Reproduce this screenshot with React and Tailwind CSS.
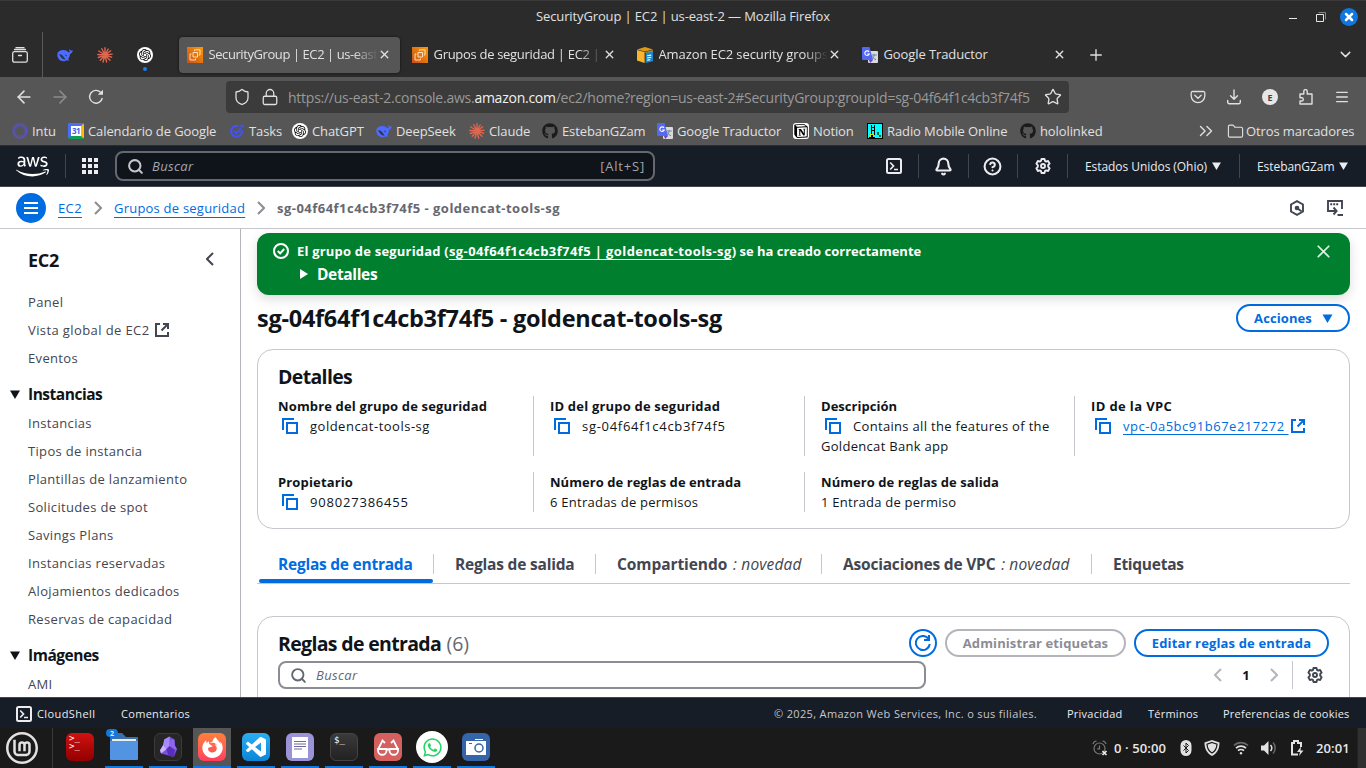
import {
  Bell, CircleHelp, ChevronDown, ChevronsRight, Plus, X, Star, Shield, Lock,
  ArrowLeft, ArrowRight, Search, Menu, Folder,
} from "lucide-react";
import { FaAws, FaGithub, FaWhatsapp } from "react-icons/fa";
import { SiOpenai, SiLinuxmint, SiFirefoxbrowser, SiNotion } from "react-icons/si";
import { BiLogoVisualStudio } from "react-icons/bi";

/* ---------- brand icons ---------- */
const Whale = () => (
  <svg viewBox="0 0 16 16" className="size-4 shrink-0">
    <path fill="#4d6bfe" d="M15.8 3.2c-.2-.1-.9.4-1.7.3-1-.1-1.300-1-1.800-1.500-.4 1.200 0 2.300.7 3-.7.5-1.600.3-2.500-.5C9.600 3.700 8.600 3.200 7.700 3.300c-1-.8-5-.6-6.700 2-1.600 2.700-.5 6.600 2.500 8.200 2.300 1.200 4.800.7 6.200-.3.800.4 1.800.5 2.700 0-.5-.4-1-.8-1.300-1.300 1.500-1.600 1.600-3.200 2-4.900 1.300-.4 2.500-1.800 2.700-3.800z" />
    <path fill="#2b2b2b" fillOpacity=".85" d="M2 7.500c1.700-.8 3.800.8 5 2.800.5.900 1 1.600 1.800 1.900-2.300.700-3.700-.4-4.900-1.900C3.200 9.300 2.700 8.100 2 7.500zM8 7.400c1 0 1.900.8 1.900 1.900-.9 0-1.900-.8-1.900-1.900z" />
  </svg>
);
const Burst = () => (
  <svg viewBox="0 0 16 16" className="size-4 shrink-0" stroke="#e0664f" strokeWidth="1.400" strokeLinecap="round">
    <path d="M8 8V.7M8 8l3.200-6M8 8l5.700-4.200M8 8l7.200-.9M8 8l6.600 2.200M8 8l5 5.300M8 8l1.600 7M8 8l-2 7M8 8l-4.800 5.200M8 8l-6.700 2.500M8 8L.8 7.500M8 8L1.800 4M8 8L4.800 1.700" />
  </svg>
);
const Gpt = () => (
  <span className="flex size-4 shrink-0 items-center justify-center rounded-full bg-white">
    <SiOpenai className="size-3 text-black" />
  </span>
);
const Ec2 = () => (
  <svg viewBox="0 0 16 16" className="size-4 shrink-0">
    <defs><linearGradient id="ec2" x1="0" y1="1" x2="1" y2="0"><stop stopColor="#c8511b" /><stop offset="1" stopColor="#ff9900" /></linearGradient></defs>
    <rect width="16" height="16" fill="url(#ec2)" />
    <path fill="none" stroke="#ffe9cf" strokeWidth=".9" d="M6 5.500h4.500V10H6zM4.500 7H3v6h5.500v-1.500M7.500 4V2.800H13V8h-1.200" />
  </svg>
);
const AwsDocs = () => (
  <svg viewBox="0 0 16 16" className="size-4 shrink-0">
    <path fill="#e09a12" d="M0 2.500L8 0l8 2.500-8 2z" /><path fill="#fbb52c" d="M0 3l7.600 2V16L0 13.500z" />
    <path fill="#c98708" d="M8.300 5L16 3v3H8.300z" /><path fill="#1c87c9" d="M8.600 5.800L16 4.500v9.700L8.600 16z" />
    <path stroke="#fff" strokeWidth="1.100" fill="none" d="M10.200 8.800l4-.7M10.200 11l4-.7M10.200 13.200l3-.6" />
  </svg>
);
const Translate = () => (
  <svg viewBox="0 0 16 16" className="size-4 shrink-0">
    <rect x="6" y="4" width="10" height="12" rx="1" fill="#d8dade" />
    <path stroke="#6b8a96" strokeWidth="1" fill="none" d="M9.500 8h5.300M12 7v1c0 2-1 3.500-2 4.300M10.500 9.500c.8 1.700 2 2.700 3.500 3.200" />
    <path fill="#6a3fd0" d="M7 13h4l-2.800 3z" /><path fill="#5468f2" d="M1 0h6.500L11 13H1a1 1 0 01-1-1V1a1 1 0 011-1z" />
    <path stroke="#fff" strokeWidth="1.100" fill="none" d="M7 4.800A2.300 2.300 0 107.300 7H5.200" />
  </svg>
);
const Calendar = () => (
  <span className="flex size-4 shrink-0 items-center justify-center overflow-hidden rounded-[2px] border-[3px] border-t-[#4a6ff0] border-r-[#fbbc04] border-b-[#0f9d58] border-l-[#4a6ff0] bg-white text-[8px] leading-none font-bold tracking-[-0.5px] text-[#3c5fe8]">
    31
  </span>
);
const Tasks = () => (
  <svg viewBox="0 0 16 16" className="size-4 shrink-0" fill="none" stroke="#4452f0">
    <path strokeWidth="2.300" d="M12.800 7.200A5.400 5.400 0 1 1 9.500 3.200" /><path strokeWidth="2.200" d="M5 8l2.300 2.300L12 5.500" /><path strokeWidth="1.200" d="M13 .8v4M11 2.800h4" />
  </svg>
);
const Intu = () => (
  <svg viewBox="0 0 16 16" className="size-4 shrink-0" fill="none" stroke="#5a50d8">
    <circle cx="8" cy="8" r="6.600" strokeWidth="2.400" strokeDasharray="1.500 .6" /><circle cx="8" cy="8" r="4.700" strokeWidth=".8" strokeDasharray="1 .5" />
  </svg>
);
const Notion = () => (
  <span className="flex size-4 shrink-0 items-center justify-center rounded-[3px] bg-white"><SiNotion className="size-[14px] text-black" /></span>
);
const Radio = () => (
  <svg viewBox="0 0 16 16" className="size-4 shrink-0" shapeRendering="crispEdges">
    <rect width="16" height="16" fill="#000" /><rect x="1" y="1" width="14" height="14" fill="#0ff" />
    <path stroke="#000" fill="none" d="M4.500 2v10M7.500 2v10M4 4.500h4M4 7.500h4" /><path fill="#dd0" d="M3 11h4v4H3z" />
    <path fill="#000" d="M2 14h6v1H2zM4 12h2v2H4z" /><path fill="#063" d="M10 9h2v3h-2zM12 12h2v2h-2z" />
  </svg>
);
const Github = () => <FaGithub className="size-4 shrink-0 text-[#1b1b1b]" />;

/* ---------- AWS icons ---------- */
const Copy = () => (
  <svg viewBox="0 0 16 16" className="size-4 shrink-0" fill="none" stroke="#006ce0" strokeWidth="2">
    <path d="M5 5h10v10H5z" /><path d="M1 12V1h11" />
  </svg>
);
const External = ({ className }) => (
  <svg viewBox="0 0 16 16" className={className} fill="none" stroke="currentColor" strokeWidth="2">
    <path d="M6 2H2v12h12v-4" /><path d="M9 2h5v5M14 2L7.500 8.500" />
  </svg>
);
const Gear = ({ className }) => (
  <svg viewBox="0 0 16 16" className={className} fill="none" stroke="currentColor" strokeWidth="1.900" strokeLinejoin="round">
    <path d="M6.500 1h3l.5 1.900 1.200.7 1.900-.6 1.500 2.600L13.200 7v1.600l1.400 1.800-1.500 2.600-1.900-.6-1.200.7-.5 1.900h-3L6 13.100l-1.200-.7-1.900.6-1.500-2.600L2.800 8.800V7.200L1.400 5.600 2.900 3l1.900.6L6 2.900z" />
    <circle cx="8" cy="8" r="2" />
  </svg>
);
const Shell = () => (
  <svg viewBox="0 0 16 16" className="size-4 shrink-0" fill="none" stroke="#ebebf0" strokeWidth="2">
    <rect x="1" y="1" width="14" height="14" rx="1.500" /><path strokeWidth="1.700" d="M4.200 4.500L7.500 8l-3.300 3.500M8 11.500h4" />
  </svg>
);
const Caret = ({ className }) => (
  <svg viewBox="0 0 10 9" className={className} fill="currentColor"><path d="M0 .5h10L5 9z" /></svg>
);

/* ---------- browser chrome ---------- */
const Tab = ({ icon, title, active, track = "", fade = true }) => (
  <div className={`flex h-9 w-[221px] shrink-0 items-center rounded pl-2 ${active ? "bg-[#565656] shadow-[0_0_3px_rgba(0,0,0,.6)]" : ""}`}>
    {icon}
    <span className={`ml-[5.5px] w-[169px] pt-px whitespace-nowrap ${track} ${fade ? "[mask-image:linear-gradient(to_left,transparent,#000_24px)]" : ""}`}>{title}</span>
    <X className="size-[13px] shrink-0" strokeWidth={2.500} />
  </div>
);

const bookmarks = [
  [<Intu />, "Intu", "w-14"],
  [<Calendar />, "Calendario de Google", "w-[161px]"],
  [<Tasks />, "Tasks", "w-[63px]"],
  [<Gpt />, "ChatGPT", "w-[84px]"],
  [<Whale />, "DeepSeek", "w-[93px]"],
  [<Burst />, "Claude", "w-[73px]"],
  [<Github />, "EstebanGZam", "w-[115px]"],
  [<Translate />, "Google Traductor", "w-[136px]"],
  [<Notion />, "Notion", "w-[74px]"],
  [<Radio />, "Radio Mobile Online", "w-[153px]"],
  [<Github />, "hololinked", "w-[100px]"],
];

function Browser() {
  return (
    <header className="h-[146px] shrink-0 text-[13px] tracking-[-0.1px] text-[#e0e0e0]">
      <div className="flex h-8 items-center border-t border-[#3a3a3a] bg-[#2b2b2b]">
        <div className="w-[100px]" />
        <div className="flex-1 text-center font-medium tracking-[-0.13px]">SecurityGroup | EC2 | us-east-2 — Mozilla Firefox</div>
        <div className="flex w-[100px] items-center justify-end pr-2">
          <span className="mt-1 mr-[19px] h-px w-2 bg-[#e8e8e8]" />
          <svg viewBox="0 0 10 10" className="mr-[14px] size-2.5" fill="none" stroke="#e8e8e8"><path d="M.5 2.500h7v7h-7z" /><path stroke="#888" d="M2.500.5h7v7" /></svg>
          <span className="flex size-[18px] items-center justify-center rounded-full bg-[#1177e0]"><X className="size-[12px]" strokeWidth={5} color="#fff" /></span>
        </div>
      </div>
      <div className="flex h-[45px] bg-[#2b2b2b]">
        <div className="flex w-[43px] items-center justify-center border-r border-[#5a5a5a] pr-[3px]">
          <svg viewBox="0 0 16 16" className="size-4" fill="none" stroke="#e0e0e0" strokeWidth="1.300" strokeLinecap="round">
            <rect x=".7" y="4.700" width="14.600" height="10.500" rx="1.800" /><path d="M2.500 2.500h11M4 .7h8M6.500 8.500h3" />
          </svg>
        </div>
        <div className="flex w-[136px] items-center gap-6 pl-[14px]">
          <Whale /><Burst />
          <span className="relative"><Gpt /><i className="absolute top-5 left-1.5 size-1 rounded-full bg-[#1a80e5]" /></span>
        </div>
        <div className="flex items-center gap-1">
          <Tab icon={<Ec2 />} title="SecurityGroup | EC2 | us-east" track="tracking-[-0.42px]" active />
          <Tab icon={<Ec2 />} title="Grupos de seguridad | EC2 | u" track="tracking-[-0.3px]" />
          <Tab icon={<AwsDocs />} title="Amazon EC2 security groups" />
          <Tab icon={<Translate />} title="Google Traductor" fade={false} />
        </div>
        <div className="flex flex-1 items-center justify-between pr-3 pl-3">
          <Plus className="size-[18px]" strokeWidth={1.800} />
          <ChevronDown className="size-[17px]" strokeWidth={2} />
        </div>
      </div>
      <div className="flex h-10 items-center bg-[#565656] px-1.5">
        <div className="flex w-[220px] items-center">
          <span className="flex w-9 justify-center"><ArrowLeft className="size-5" strokeWidth={1.900} /></span>
          <span className="flex w-9 justify-center text-[#8c8c8c]"><ArrowRight className="size-5" strokeWidth={1.900} /></span>
          <span className="flex w-9 justify-center">
            <svg viewBox="0 0 16 16" className="size-4" fill="none" stroke="currentColor" strokeWidth="1.400"><path d="M14.300 9A6.400 6.400 0 1 1 12.500 3.200L14 4.800" /><path fill="currentColor" stroke="none" d="M15 .8v5H9.800z" /></svg>
          </span>
        </div>
        <div className="flex h-8 w-[843px] items-center rounded bg-[#3b3b3b] px-[7px]">
          <Shield className="size-[18px]" strokeWidth={1.700} />
          <Lock className="ml-[10px] size-[18px]" strokeWidth={1.700} />
          <div className="ml-[9px] flex flex-1 text-[14px] tracking-[-0.25px] whitespace-nowrap text-[#999]">
            https://us-east-2.console.aws.<span className="text-[#f0f0f0]">amazon.com</span>/ec2/home?region=us-east-2#SecurityGroup:groupId=sg-04f64f1c4cb3f74f5
          </div>
          <Star className="size-[18px]" strokeWidth={1.800} />
        </div>
        <div className="ml-auto flex">
          <span className="flex w-9 items-center justify-center">
            <svg viewBox="0 0 16 16" className="size-4" fill="none" stroke="currentColor" strokeWidth="1.300" strokeLinecap="round"><path d="M1.200 3.800a1.300 1.300 0 011.300-1.300h11a1.300 1.300 0 011.300 1.300V7A6.800 6.800 0 018 13.600 6.800 6.800 0 011.200 7z" /><path d="M4.800 6.300L8 9.300l3.200-3" /></svg>
          </span>
          <span className="flex w-9 items-center justify-center">
            <svg viewBox="0 0 16 16" className="size-4" fill="none" stroke="currentColor" strokeWidth="1.400" strokeLinecap="round" strokeLinejoin="round"><path d="M8 1v9M4.500 6.800L8 10.300l3.500-3.500" /><path d="M1.700 11.500v1.700a1.500 1.500 0 001.500 1.500h9.600a1.500 1.500 0 001.500-1.500v-1.700" /></svg>
          </span>
          <span className="flex w-9 items-center justify-center"><b className="flex size-4 items-center justify-center rounded-full bg-[#e6e6e6] text-[9px] leading-none text-[#444]">E</b></span>
          <span className="flex w-9 items-center justify-center">
            <svg viewBox="0 0 16 16" className="size-4" fill="none" stroke="currentColor" strokeWidth="1.400" strokeLinejoin="round"><path d="M2 5h3.800V2.300a1.700 1.700 0 013.400 0V5H14v10H2v-3h1.700a1.600 1.600 0 000-3.200H2z" /></svg>
          </span>
          <span className="flex w-9 items-center justify-center"><Menu className="size-4" strokeWidth={1.900} /></span>
        </div>
      </div>
      <div className="flex h-[29px] items-center border-b border-[#2a2d31] bg-[#565656] pl-3">
        {bookmarks.map(([icon, label, w], i) => (
          <div key={i} className={`flex shrink-0 items-center gap-1 whitespace-nowrap ${w}`}>{icon}<span className="pt-0.5">{label}</span></div>
        ))}
        <div className="ml-auto flex items-center whitespace-nowrap">
          <ChevronsRight className="mr-[10px] size-[22px]" strokeWidth={1.500} />
          <Folder className="mr-[2px] size-[17px]" strokeWidth={1.600} />
          <span className="w-[120px] pt-0.5">Otros marcadores</span>
        </div>
      </div>
    </header>
  );
}

/* ---------- AWS console ---------- */
function ConsoleHeader() {
  return (
    <div className="flex h-[41px] shrink-0 items-center border-b border-[#424650] bg-[#161d26] text-[12px] tracking-[-0.06px] text-[#ebebf0]">
      <div className="flex h-6 w-[66px] items-center border-r border-[#424650] pl-4"><FaAws className="size-[33px] text-white" /></div>
      <svg viewBox="0 0 16 16" className="ml-4 size-4 fill-[#ebebf0]">
        <path d="M0 0h4v4H0zM6 0h4v4H6zM12 0h4v4h-4zM0 6h4v4H0zM6 6h4v4H6zM12 6h4v4h-4zM0 12h4v4H0zM6 12h4v4H6zM12 12h4v4h-4z" />
      </svg>
      <div className="ml-[17px] flex h-[30px] w-[540px] items-center rounded-lg border-2 border-[#656871] bg-[#0f141a] px-2.5 text-[13px] text-[#a4a4ad]">
        <Search className="size-[17px] text-[#c6c6cd]" strokeWidth={2.900} />
        <i className="ml-2 pt-0.5 tracking-[0.35px]">Buscar</i>
        <span className="mr-[-2px] ml-auto pt-0.5 tracking-[0.8px]">[Alt+S]</span>
      </div>
      <div className="ml-auto flex items-center">
        <span className="flex h-6 w-[49px] items-center justify-center border-r border-[#424650]"><Shell /></span>
        <span className="flex h-6 w-[50px] items-center justify-center border-r border-[#424650] pr-px"><Bell className="size-[19px]" strokeWidth={2.700} /></span>
        <span className="flex h-6 w-[49px] items-center justify-center border-r border-[#424650] pr-px"><CircleHelp className="size-[19px]" strokeWidth={2.600} /></span>
        <span className="flex h-6 w-[50px] items-center justify-center border-r border-[#424650]"><Gear className="size-4" /></span>
        <span className="flex h-6 w-[172px] items-center border-r border-[#424650] pl-[17px]"><span className="w-[127px] pt-0.5">Estados Unidos (Ohio)</span><Caret className="h-2 w-[9px]" /></span>
        <span className="flex h-6 w-[126px] items-center pl-[17px]"><span className="w-[82px] pt-0.5">EstebanGZam</span><Caret className="h-2 w-[9px]" /></span>
      </div>
    </div>
  );
}

const Crumb = () => (
  <svg viewBox="0 0 8 14" className="mx-[5px] h-3.5 w-2 shrink-0" fill="none" stroke="#8c8c94" strokeWidth="2"><path d="M1 1l6 6-6 6" /></svg>
);

function Breadcrumbs() {
  return (
    <div className="flex h-[42px] shrink-0 items-center border-b border-[#c6c6cd] bg-white pl-4 text-[13px]">
      <span className="flex size-[30px] items-center justify-center rounded-full bg-[#006ce0]">
        <svg viewBox="0 0 14 12" className="h-3 w-[14px] stroke-white" strokeWidth="2"><path d="M0 1h14M0 6h14M0 11h14" /></svg>
      </span>
      <span className="ml-3 w-[31px] pt-0.5 tracking-[0.4px] text-[#006ce0] underline underline-offset-4">EC2</span>
      <Crumb />
      <span className="ml-[7px] w-[138px] pt-0.5 tracking-[0.22px] text-[#006ce0] underline underline-offset-4">Grupos de seguridad</span>
      <Crumb />
      <span className="ml-[7px] pt-0.5 font-bold tracking-[0.48px] text-[#656871]">sg-04f64f1c4cb3f74f5 - goldencat-tools-sg</span>
      <div className="ml-auto flex items-center gap-[22px] pr-[23px] text-[#424650]">
        <svg viewBox="0 0 16 16" className="size-4" fill="none" stroke="currentColor" strokeWidth="1.900"><path d="M8 1.100l6 3.400v7L8 14.900l-6-3.400v-7z" /><circle cx="8" cy="8" r="1.400" fill="currentColor" /><path d="M8 8.200l4.500 3" /></svg>
        <svg viewBox="0 0 16 16" className="size-4" fill="none" stroke="currentColor" strokeWidth="1.900"><path d="M5 11H1V1h14v8" /><path strokeDasharray="2 1" d="M3.200 4.200h9" /><path d="M4.500 11h4.200M6.500 7.500L9.600 11l-3.100 3.500M10.500 15H16" /></svg>
      </div>
    </div>
  );
}

const instanceLinks = ["Instancias", "Tipos de instancia", "Plantillas de lanzamiento", "Solicitudes de spot", "Savings Plans", "Instancias reservadas", "Alojamientos dedicados", "Reservas de capacidad"];

const NavLink = ({ children }) => <li className="flex h-7 items-center pt-0.5 pl-7">{children}</li>;
const NavHead = ({ children }) => (
  <h3 className="flex h-6 items-center text-[15.5px] font-bold tracking-[-0.48px] text-[#0f141a]">
    <Caret className="mr-2 ml-[10px] h-[9px] w-[10px]" /><span className="pt-0.5">{children}</span>
  </h3>
);

function Sidebar() {
  return (
    <nav className="w-[241px] shrink-0 overflow-hidden border-r border-[#b4b4bb] text-[13px] tracking-[0.33px] text-[#424650]">
      <div className="flex h-[59px] items-center justify-between pt-[3px] pr-[26px] pl-7">
        <span className="text-[18px] font-bold tracking-[-0.3px] text-[#0f141a]">EC2</span>
        <svg viewBox="0 0 8 14" className="mb-[3px] h-3.5 w-2" fill="none" stroke="currentColor" strokeWidth="2"><path d="M7 1L1 7l6 6" /></svg>
      </div>
      <ul>
        <NavLink>Panel</NavLink>
        <NavLink><span className="tracking-[0.4px]">Vista global de EC2</span> <External className="mb-0.5 ml-[4px] size-4" /></NavLink>
        <NavLink>Eventos</NavLink>
      </ul>
      <div className="h-[10px]" />
      <NavHead>Instancias</NavHead>
      <ul className="pt-[3px]">{instanceLinks.map((l) => <NavLink key={l}>{l}</NavLink>)}</ul>
      <div className="h-[10px]" />
      <NavHead>Imágenes</NavHead>
      <ul className="pt-[3px]"><NavLink>AMI</NavLink></ul>
    </nav>
  );
}

function Banner() {
  return (
    <div className="relative z-10 flex h-[62px] shrink-0 rounded-xl bg-[#00802f] px-4 pt-[9px] text-white shadow-[0_4px_12px_rgba(0,7,22,.14)]">
      <svg viewBox="0 0 16 16" className="mt-px size-4" fill="none" stroke="currentColor" strokeWidth="2"><circle cx="8" cy="8" r="7" /><path d="M4.800 8l2.400 2.400 4-4.400" /></svg>
      <div className="ml-2">
        <p className="flex h-[18px] items-center pt-0.5 text-[13px] font-bold whitespace-pre">
          <span className="tracking-[0.2px]">El grupo de seguridad (</span>
          <span className="tracking-[0.4px] underline underline-offset-[3px]">sg-04f64f1c4cb3f74f5 | goldencat-tools-sg</span>
          <span>) se ha creado correctamente</span>
        </p>
        <p className="mt-0.5 flex h-6 items-center text-[15.5px] font-bold tracking-[-0.35px]">
          <svg viewBox="0 0 8 10" className="mr-[9px] ml-[3px] h-[10px] w-2" fill="currentColor"><path d="M0 0l8 5-8 5z" /></svg><span className="pt-0.5">Detalles</span>
        </p>
      </div>
      <X className="mt-[-1px] mr-0 ml-auto size-[21px] text-[#e4f0e8]" strokeWidth={2} />
    </div>
  );
}

const Field = ({ label, children, first, track = "tracking-[0.15px]" }) => (
  <div className={first ? "" : "border-l border-[#c6c6cd] pl-4"}>
    <div className={`font-bold ${track}`}>{label}</div>
    {children}
  </div>
);
const Copyable = ({ children }) => (
  <div className="flex h-5 items-center"><span className="mr-3 ml-1"><Copy /></span>{children}</div>
);

function Details() {
  return (
    <section className="mt-[17px] h-[180px] shrink-0 rounded-2xl border border-[#c6c6cd] px-5 pt-4 text-[13px] leading-5 text-[#0f141a]">
      <h2 className="flex h-[22px] items-center text-[19.5px] font-bold tracking-[-0.65px]">Detalles</h2>
      <div className="mt-2 grid h-[60px] grid-cols-[255px_271px_270px_1fr]">
        <Field first label="Nombre del grupo de seguridad"><Copyable><span className="tracking-[0.5px]">goldencat-tools-sg</span></Copyable></Field>
        <Field label="ID del grupo de seguridad" track="tracking-[0.19px]"><Copyable><span className="tracking-[0.7px]">sg-04f64f1c4cb3f74f5</span></Copyable></Field>
        <Field label="Descripción" track="tracking-[0.03px]"><Copyable><span className="tracking-[0.32px]">Contains all the features of the</span></Copyable><div className="tracking-[0.3px]">Goldencat Bank app</div></Field>
        <Field label="ID de la VPC" track="tracking-[0.38px]">
          <Copyable><span className="mr-px tracking-[0.52px] whitespace-pre text-[#006ce0] underline underline-offset-[3px]">vpc-0a5bc91b67e217272 </span><External className="size-4 text-[#006ce0]" /></Copyable>
        </Field>
      </div>
      <div className="mt-4 grid h-10 grid-cols-[255px_271px_270px_1fr]">
        <Field first label="Propietario"><Copyable><span className="tracking-[0.8px]">908027386455</span></Copyable></Field>
        <Field label="Número de reglas de entrada" track="tracking-[0.05px]"><div className="tracking-[0.25px]">6 Entradas de permisos</div></Field>
        <Field label="Número de reglas de salida" track="tracking-[0.06px]"><div className="tracking-[0.25px]">1 Entrada de permiso</div></Field>
      </div>
    </section>
  );
}

const tabs = [
  ["Reglas de salida", null, "w-[162px] tracking-[-0.2px]"],
  ["Compartiendo", ": novedad", "w-[226px] tracking-[-0.08px]"],
  ["Asociaciones de VPC", ": novedad", "w-[270px] tracking-[-0.2px]"],
  ["Etiquetas", null, "w-[160px] tracking-[-0.27px]"],
];

function RuleTabs() {
  return (
    <div className="mt-[21px] flex h-[34px] shrink-0 border-b border-[#c6c6cd] text-[15.5px] leading-7 font-bold text-[#424650]">
      <div className="relative w-44 pl-[21px] tracking-[-0.24px] text-[#006ce0]">
        Reglas de entrada
        <i className="absolute bottom-0 left-0.5 h-1 w-[174px] rounded-sm bg-[#006ce0]" />
      </div>
      {tabs.map(([t, extra, w]) => (
        <div key={t} className={`mt-1 h-5 border-l border-[#c6c6cd] pl-[21px] leading-5 whitespace-nowrap ${w}`}>
          {t} {extra && <i className="ml-0.5 font-medium tracking-[0.15px]">{extra}</i>}
        </div>
      ))}
    </div>
  );
}

function Rules() {
  return (
    <section className="mt-8 h-[120px] shrink-0 rounded-t-2xl border border-[#c6c6cd] px-5 pt-3 text-[13px] text-[#0f141a]">
      <div className="flex h-7 items-center gap-2 font-bold">
        <h2 className="flex-1 pt-0.5 text-[19.5px] tracking-[-0.66px]">Reglas de entrada <span className="ml-px font-normal tracking-[-0.1px] text-[#656871]">(6)</span></h2>
        <span className="flex size-7 items-center justify-center rounded-full border-2 border-[#006ce0] text-[#006ce0]">
          <svg viewBox="0 0 16 16" className="size-4" fill="none" stroke="currentColor" strokeWidth="2"><path d="M14.800 9A7 7 0 1 1 13 3.200L14 4.500M14 0v5H9" /></svg>
        </span>
        <span className="flex h-7 w-[181px] items-center justify-center rounded-full border-2 border-[#b4b4bb] pt-0.5 tracking-[0.1px] text-[#8c8c94]">Administrar etiquetas</span>
        <span className="flex h-7 w-[195px] items-center justify-center rounded-full border-2 border-[#006ce0] pt-0.5 tracking-[0.15px] text-[#006ce0]">Editar reglas de entrada</span>
      </div>
      <div className="mt-1 flex h-7 items-center">
        <div className="flex h-7 w-[648px] items-center rounded-lg border-2 border-[#8c8c94] pl-2.5 text-[#656871]">
          <Search className="size-[17px]" strokeWidth={2.700} /><i className="ml-[9px] pt-0.5 tracking-[0.35px]">Buscar</i>
        </div>
        <div className="ml-auto flex h-full items-center text-[#b4b4bb]">
          <svg viewBox="0 0 8 14" className="mr-[5px] h-3.5 w-2" fill="none" stroke="currentColor" strokeWidth="2"><path d="M7 1L1 7l6 6" /></svg>
          <b className="w-[38px] pt-0.5 text-center text-[#0f141a]">1</b>
          <svg viewBox="0 0 8 14" className="ml-[5px] h-3.5 w-2" fill="none" stroke="currentColor" strokeWidth="2"><path d="M1 1l6 6-6 6" /></svg>
          <span className="ml-[14px] h-full w-px bg-[#c6c6cd]" />
          <Gear className="mr-[6px] ml-[14px] size-4 text-[#424650]" />
        </div>
      </div>
    </section>
  );
}

/* ---------- desktop panel ---------- */
const Gem = () => (
  <svg viewBox="0 0 16 20" className="h-[22px] w-[17px]">
    <path fill="#7c4fe0" d="M9 0l4.500 3 .5 5.500 2 3.500-3 7.500-5-1.500L1 16 0 13l3-5 1-5z" />
    <path fill="#a88bfa" d="M9 0L4 3 3 8l3 4 3-3z" /><path fill="#c9b6ff" d="M3 8l-3 5 1 3 5-4z" />
    <path fill="#5a2fb8" d="M6 12l3-3 5 3.500-1 7-5-1.500z" /><path fill="#8e66ec" d="M9 9l1-6 3.500 0 .5 5.500 2 3.500-2 .5z" />
  </svg>
);

const apps = [
  [<span className="flex size-7 flex-col rounded-md bg-gradient-to-b from-[#d01212] to-[#930000] pt-[1px] pl-[3px] font-[DejaVu_Sans_Mono] text-[9px] leading-[8px] text-white"><span>&gt;_</span><span>&gt;_</span></span>, false],
  [<svg viewBox="0 0 28 28" className="size-7"><path fill="#3a6fb0" d="M0 26V2a2 2 0 012-2h10l4 4h12v22z" /><path fill="#eee" d="M2 6h24v3H2z" /><path fill="#5294e2" d="M0 8h28v18a1 1 0 01-1 1H1a1 1 0 01-1-1z" /></svg>, true],
  [<span className="flex size-7 items-center justify-center rounded-md border border-[#3a3a3a] bg-[#262626]"><Gem /></span>, true],
  [<span className="flex size-7 items-center justify-center rounded-md bg-gradient-to-b from-[#ff8038] to-[#ff3d5e]"><SiFirefoxbrowser className="size-[21px] text-white" /></span>, true, true],
  [<span className="flex size-7 items-center justify-center rounded-md bg-gradient-to-b from-[#2aaef0] to-[#0a86d8]"><BiLogoVisualStudio className="size-6 text-white" /></span>, true],
  [<svg viewBox="0 0 28 28" className="size-7"><rect width="28" height="28" rx="6" fill="#9b93d8" /><path fill="#fff" d="M6 4h16v21H6z" /><path stroke="#6a6d9a" d="M8 8.500h12M8 11h12M8 13.500h12M8 16h8" /></svg>, true],
  [<span className="flex size-7 items-start rounded-md border border-[#444] bg-gradient-to-b from-[#3a3a3a] to-[#222] pt-[2px] pl-[3px] font-[DejaVu_Sans_Mono] text-[9px] leading-[9px] text-white">$_</span>, true],
  [<svg viewBox="0 0 28 28" className="size-7"><rect width="28" height="28" rx="6" fill="#d4605f" /><g fill="none" stroke="#fff" strokeWidth="1.800"><path d="M4 16h8.500v1.500a4.200 4.200 0 01-8.500 0zM15.500 16H24v1.500a4.200 4.200 0 01-8.500 0z" /><path d="M12.500 16.500h3M4 16.500L8.500 7.500l2.500 2.500M24 16.500l-4.500-9L17 10" /></g></svg>, true],
  [<span className="flex size-8 shrink-0 items-center justify-center rounded-full bg-white"><FaWhatsapp className="size-[21px] text-[#25d366]" /></span>, true],
  [<svg viewBox="0 0 28 28" className="size-7"><rect width="28" height="28" rx="6" fill="#3565a8" /><path fill="#fff" d="M4 8h20v14H4zM13 6h8v1h-8z" /><circle cx="17" cy="15" r="4" fill="none" stroke="#3565a8" strokeWidth="1.500" /><path stroke="#3565a8" d="M7 10.500h3" /></svg>, true],
];

function ConsoleFooter() {
  return (
    <footer className="flex h-[31px] shrink-0 items-center border-t border-[#424650] bg-[#161d26] px-4 pt-0.5 text-[11px] tracking-[0.24px] text-[#ebebf0]">
      <Shell /><span className="ml-[5px] w-[84px] tracking-[0.4px]">CloudShell</span><span className="tracking-[0.3px]">Comentarios</span>
      <span className="ml-auto w-[293px] tracking-[0.34px] text-[#c6c6cd]">© 2025, Amazon Web Services, Inc. o sus filiales.</span>
      <span className="w-[81px]">Privacidad</span><span className="w-[75px]">Términos</span><span className="w-[127px] whitespace-nowrap">Preferencias de cookies</span>
    </footer>
  );
}

function Taskbar() {
  return (
    <div className="flex h-10 shrink-0 bg-[#1a1a1a] text-[13px] text-[#e8e8e8]">
      <div className="flex w-[53px] items-center border-r border-[#3a3a3a] pl-1.5">
        <SiLinuxmint className="size-8 text-[#e2e2e2]" />
      </div>
      <div className="flex gap-1.5 pl-2">
        {apps.map(([icon, running, active], i) => (
          <div key={i} className={`relative flex w-[38px] items-center justify-center border-b-2 ${running ? "border-[#1278de]" : "border-transparent"} ${active ? "bg-[#565656]" : ""}`}>
            {icon}
            {i === 1 && <span className="absolute top-px left-px flex h-2 w-3 items-center justify-center rounded-full bg-[#1278de] text-[7px] leading-none font-bold">2</span>}
          </div>
        ))}
      </div>
      <div className="ml-auto flex items-center">
        <svg viewBox="0 0 16 16" className="size-4" fill="none" stroke="#777" strokeWidth="1.200"><circle cx="7.500" cy="8.500" r="5.500" /><path d="M7.500 5.500v3.300H5.200M1 4.200A4 4 0 014.500 1M10.500 1A4 4 0 0114 4.200" /><path stroke="#eee" strokeWidth="1.600" d="M10.500 11l4 4M14.500 11l-4 4" /></svg>
        <span className="ml-[6px] w-[66px] pt-0.5 font-semibold tracking-[0.1px]">0 · 50:00</span>
        <svg viewBox="0 0 12 16" className="h-4 w-3"><rect x=".5" width="11" height="16" rx="5.500" fill="#e2e2e2" /><path stroke="#1a1a1a" fill="none" d="M3.500 5.500l5 5L6 13V3l2.500 2.500-5 5" /></svg>
        <svg viewBox="0 0 16 16" className="ml-[12px] size-4"><path fill="#e2e2e2" d="M8 0l7.500 2.500C15.500 9 13 13.500 8 16 3 13.500.5 9 .5 2.500z" /><path fill="none" stroke="#1a1a1a" strokeWidth="1.200" d="M8 2.500l5 1.600c-.2 4-2 7.200-5 9-3-1.800-4.800-5-5-9z" /></svg>
        <svg viewBox="0 0 16 16" className="ml-[13px] size-4" fill="none" stroke="#e2e2e2" strokeWidth="1.700"><path stroke="#6a6a6a" d="M1 5.500a10 10 0 0114 0" /><path d="M3 8.200a7.200 7.200 0 0110 0M5 10.700a4.400 4.400 0 016 0" /><circle cx="8" cy="13.300" r="1.200" fill="#e2e2e2" stroke="none" /></svg>
        <svg viewBox="0 0 16 16" className="ml-[12px] size-4" fill="none" stroke="#e2e2e2" strokeWidth="1.500"><path fill="#e2e2e2" stroke="none" d="M0 5.500h3L7.500 1v14L3 10.500H0z" /><path d="M9.500 5a4.500 4.500 0 010 6" /><path stroke="#6a6a6a" d="M12 2.500a8 8 0 010 11" /></svg>
        <svg viewBox="0 0 14 16" className="ml-[13px] h-4 w-3.5" fill="none" stroke="#e2e2e2" strokeWidth="2"><path d="M8 14.500H2V3h2V1h4v2h3v4" /><path fill="#e2e2e2" stroke="none" d="M11 6.500L7 12h3l-1 4 4.500-5.500h-3z" /></svg>
        <span className="ml-[12px] w-[41px] pt-0.5 font-semibold tracking-[0.1px]">20:01</span>
        <span className="h-full w-[9px] border-l border-[#222] bg-[#303030]" />
      </div>
    </div>
  );
}

export default function App() {
  return (
    <div className="flex h-[768px] w-[1366px] flex-col overflow-hidden bg-white font-['Open_Sans','Noto_Sans',sans-serif]">
      <Browser />
      <ConsoleHeader />
      <Breadcrumbs />
      <div className="flex min-h-0 flex-1">
        <Sidebar />
        <main className="flex min-w-0 flex-1 flex-col overflow-hidden px-4 pt-1">
          <Banner />
          <div className="mt-[9px] flex h-7 shrink-0 items-center justify-between text-[#0f141a]">
            <h1 className="pt-0.5 text-[23.5px] font-bold tracking-[-0.27px]">sg-04f64f1c4cb3f74f5 - goldencat-tools-sg</h1>
            <span className="flex h-7 w-[114px] items-center justify-center gap-[10px] rounded-full border-2 border-[#006ce0] pl-px text-[13px] font-bold tracking-[0.1px] text-[#006ce0]"><span className="pt-0.5">Acciones</span> <Caret className="h-[9px] w-[11px]" /></span>
          </div>
          <Details />
          <RuleTabs />
          <Rules />
        </main>
      </div>
      <ConsoleFooter />
      <Taskbar />
    </div>
  );
}
